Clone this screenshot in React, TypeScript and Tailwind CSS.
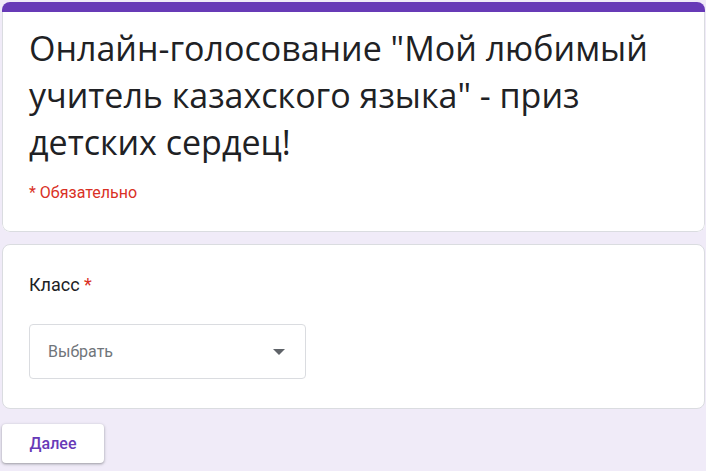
import React from "react";

export default function App() {
  return (
    <div className="min-h-[471px] w-[706px] bg-[#f0ebf8] pl-[2px] pr-[1px] pt-[2px]" style={{ fontFamily: "Roboto, Arial, sans-serif" }}>
      <div className="flex flex-col gap-[12px]">
        <div className="overflow-hidden rounded-[8px] bg-white">
          <div className="h-[10px] bg-[#673ab7]" />
          <div className="rounded-b-[8px] border border-t-0 border-[#dadce0] px-[26px] pb-[27px] pt-[13px]">
            <div className="whitespace-nowrap text-[34px] leading-[47px] text-[#202124]" style={{ fontFamily: "'Open Sans', sans-serif" }}>
              Онлайн-голосование "Мой любимый
              <br />
              учитель казахского языка" - приз
              <br />
              детских сердец!
            </div>
            <div className="mt-[16px] text-[16px] leading-[22px] text-[#d93025]">* Обязательно</div>
          </div>
        </div>
        <div className="rounded-[8px] border border-[#dadce0] bg-white px-[26px] pb-[29px] pt-[28px]">
          <div className="text-[18px] leading-[24px] text-[#202124]">
            Класс <span className="text-[#d93025]">*</span>
          </div>
          <div className="mt-[27px] flex h-[55px] w-[277px] items-center justify-between rounded-[4px] border border-[#dadce0] pl-[18px] pr-[20px]">
            <span className="text-[16px] text-[#70757a]">Выбрать</span>
            <svg width="12" height="6" viewBox="0 0 10 5">
              <path d="M0 0 L5 5 L10 0 Z" fill="#5f6368" />
            </svg>
          </div>
        </div>
        <div className="mt-[3px]">
          <button className="h-[39px] w-[102px] rounded-[4px] bg-white text-[16px] font-medium text-[#673ab7] shadow-[0_1px_2px_rgba(60,64,67,0.3),0_1px_3px_1px_rgba(60,64,67,0.15)]">
            Далее
          </button>
        </div>
      </div>
    </div>
  );
}
